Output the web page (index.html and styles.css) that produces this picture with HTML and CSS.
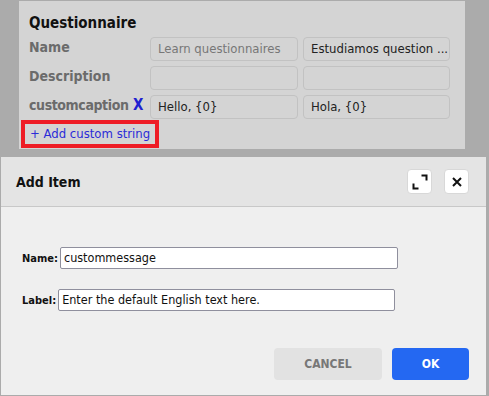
FILE: index.html
```html
<!DOCTYPE html>
<html>
<head>
<meta charset="utf-8">
<link rel="stylesheet" href="styles.css">
</head>
<body>
<div class="panel">
  <div class="title">Questionnaire</div>
  <div class="grid">
    <div class="lbl">Name</div>
    <div class="fld placeholder">Learn questionnaires</div>
    <div class="fld">Estudiamos question ...</div>
    <div class="lbl">Description</div>
    <div class="fld"></div>
    <div class="fld"></div>
    <div class="lbl"><span class="cc">customcaption</span> <span class="x">X</span></div>
    <div class="fld">Hello, {0}</div>
    <div class="fld">Hola, {0}</div>
  </div>
  <div class="addrow"><span class="add">+ Add custom string</span></div>
</div>
<div class="dialog">
  <div class="dhead">
    <div class="dtitle">Add Item</div>
    <div class="hbtns">
      <button class="hbtn" aria-label="maximize">
        <svg width="16" height="16" viewBox="0 0 16 16"><path d="M9.5 1.5h5v5M1.5 9.5v5h5" fill="none" stroke="#111" stroke-width="2"/></svg>
      </button>
      <button class="hbtn" aria-label="close">
        <svg width="10" height="10" viewBox="0 0 10 10"><path d="M1 1l8 8M9 1l-8 8" fill="none" stroke="#111" stroke-width="2"/></svg>
      </button>
    </div>
  </div>
  <div class="dbody">
    <div class="frow"><span class="flbl">Name:</span><span class="inp w1">custommessage</span></div>
    <div class="frow r2"><span class="flbl">Label:</span><span class="inp w2">Enter the default English text here.</span></div>
    <div class="actions">
      <button class="btn cancel">CANCEL</button>
      <button class="btn ok">OK</button>
    </div>
  </div>
</div>
</body>
</html>
```
FILE: styles.css
```css
html, body { margin: 0; padding: 0; }
body {
  background: #ababab;
  width: 489px;
  height: 396px;
  overflow: hidden;
  font-family: "DejaVu Sans Condensed", "DejaVu Sans", sans-serif;
}
.panel {
  margin: 1px 0 0 19px;
  width: 446px;
  height: 148px;
  box-sizing: border-box;
  background: #d4d4d4;
  padding: 13px 0 0 10px;
}
.title {
  font-weight: bold;
  font-size: 15px;
  line-height: 18px;
  color: #111;
  height: 23px;
}
.grid {
  display: grid;
  grid-template-columns: 116px 148px 147px;
  grid-auto-rows: 24px;
  column-gap: 5px;
  row-gap: 5px;
}
.lbl {
  font-weight: bold;
  font-size: 14px;
  color: #6b6b6b;
  line-height: 20px;
  white-space: nowrap;
}
.lbl .cc { letter-spacing: -0.4px; }
.lbl .x { color: #2020d0; font-size: 15px; }
.fld {
  border: 1px solid #c2c2c2;
  border-radius: 4px;
  font-size: 13px;
  line-height: 22px;
  padding: 0 7px;
  color: #222;
  white-space: nowrap;
  overflow: hidden;
}
.fld.placeholder { color: #777; }
.addrow { margin: 1px 0 0 -8px; }
.add {
  display: inline-block;
  border: 4px solid #ee1c25;
  color: #2b2bd8;
  font-size: 13px;
  line-height: 20px;
  padding: 0 5px 0 5px;
}
.dialog {
  margin: 8px 0 0 1px;
  width: 485px;
  height: 238px;
  background: #efefef;
}
.dhead {
  height: 49px;
  border-bottom: 1px solid #c8c8c8;
  background: #e4e4e4;
  display: flex;
  align-items: center;
  justify-content: space-between;
  padding: 0 17px 0 15px;
}
.dtitle { font-weight: bold; font-size: 14px; color: #111; }
.hbtns { display: flex; gap: 12px; }
.hbtn {
  width: 25px;
  height: 25px;
  padding: 0;
  border: 1px solid #d8d8d8;
  border-radius: 4px;
  background: #fff;
  display: flex;
  align-items: center;
  justify-content: center;
}
.dbody { padding: 40px 0 0 21px; }
.frow { display: flex; align-items: center; height: 22px; }
.frow.r2 { margin-top: 20px; }
.flbl { font-weight: bold; font-size: 11px; color: #111; margin-right: 2px; }
.inp {
  box-sizing: border-box;
  height: 22px;
  border: 1px solid #8f8f9d;
  border-radius: 2px;
  background: #fff;
  font-size: 12.5px;
  line-height: 20px;
  padding: 0 3px;
  color: #111;
}
.w1 { width: 338px; }
.w2 { width: 337px; }
.actions {
  display: flex;
  justify-content: flex-end;
  gap: 10px;
  margin: 37px 17px 0 0;
}
.btn {
  height: 32px;
  border: 0;
  border-radius: 4px;
  font-family: "DejaVu Sans Condensed", "DejaVu Sans", sans-serif;
  font-weight: bold;
  font-size: 12px;
}
.cancel { width: 108px; background: #e2e2e2; color: #777; }
.ok { width: 77px; background: #2468f2; color: #fff; }
```
